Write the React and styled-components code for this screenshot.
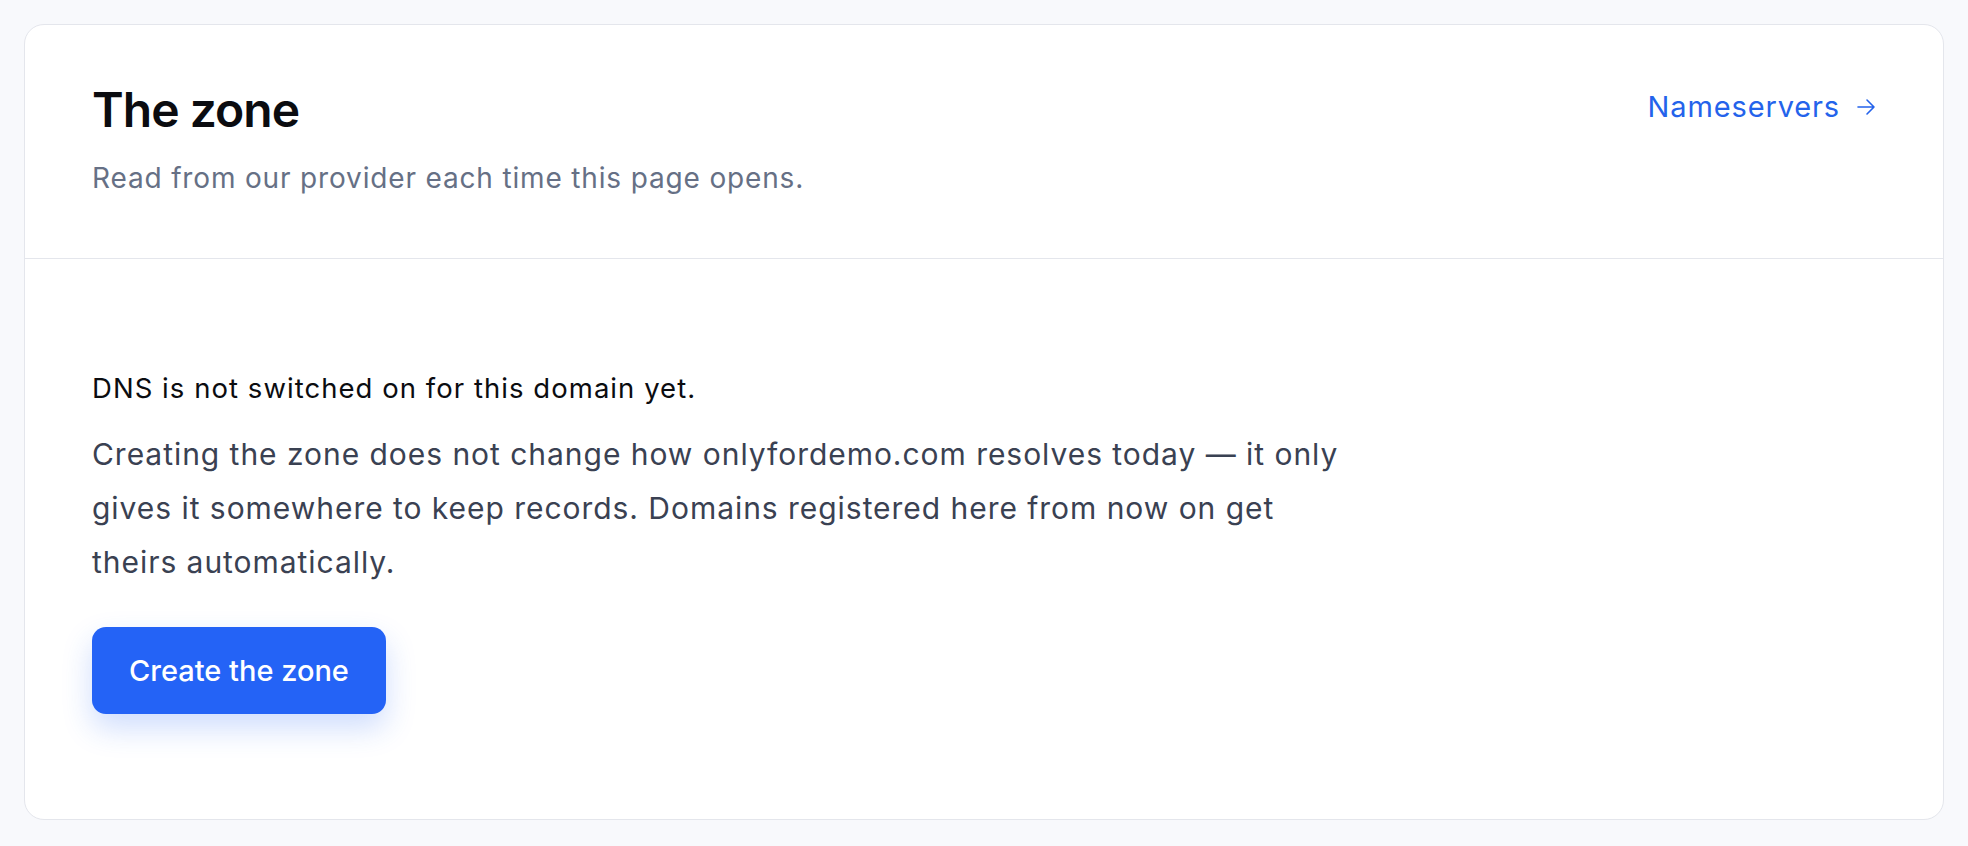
import React from "react";
import styled, { createGlobalStyle } from "styled-components";

const GlobalStyle = createGlobalStyle`
  html, body {
    margin: 0;
    padding: 0;
    background: #f8f9fc;
    font-family: Inter, "Noto Sans", sans-serif;
    -webkit-font-smoothing: antialiased;
  }
`;

const Page = styled.div`
  padding: 24px;
  min-height: 846px;
  box-sizing: border-box;
`;

const Card = styled.section`
  background: #ffffff;
  border: 1px solid #e4e6ec;
  border-radius: 20px;
`;

const Header = styled.header`
  display: flex;
  justify-content: space-between;
  align-items: flex-start;
  padding: 56px 67px 59px;
  border-bottom: 1px solid #e4e6ec;
`;

const Title = styled.h1`
  margin: 0;
  font-size: 48px;
  line-height: 1.2;
  font-weight: 600;
  color: #0b0c10;
  letter-spacing: -0.02em;
`;

const Subtitle = styled.p`
  margin: 18px 0 0;
  font-size: 28px;
  line-height: 1.5;
  color: #667085;
  letter-spacing: 0.03em;
`;

const NavLink = styled.a`
  display: flex;
  align-items: center;
  gap: 16px;
  margin-top: 4px;
  font-size: 29px;
  line-height: 1.5;
  color: #2463eb;
  text-decoration: none;
  letter-spacing: 0.03em;
  cursor: pointer;
`;

const Body = styled.div`
  padding: 109px 67px 105px;
`;

const Lead = styled.p`
  margin: 0;
  font-size: 27.5px;
  line-height: 1.5;
  color: #0b0c10;
  letter-spacing: 0.038em;
`;

const Text = styled.p`
  margin: 18px 0 0;
  max-width: 1260px;
  font-size: 30px;
  line-height: 54px;
  color: #3a4152;
  letter-spacing: 0.032em;
`;

const Button = styled.button`
  margin-top: 38px;
  height: 87px;
  padding: 0 37px;
  border: none;
  border-radius: 14px;
  background: #2463f6;
  color: #ffffff;
  font-family: inherit;
  font-size: 29px;
  font-weight: 500;
  box-shadow: 0 14px 30px rgba(36, 99, 246, 0.22);
  cursor: pointer;
`;

const Arrow = () => (
  <svg width="20" height="20" viewBox="0 0 20 20" fill="none" stroke="currentColor" strokeWidth="1.6" strokeLinecap="round" strokeLinejoin="round">
    <path d="M2 10h16M11 3l7 7-7 7" />
  </svg>
);

export default function App() {
  return (
    <>
      <GlobalStyle />
      <Page>
        <Card>
          <Header>
            <div>
              <Title>The zone</Title>
              <Subtitle>Read from our provider each time this page opens.</Subtitle>
            </div>
            <NavLink>
              Nameservers <Arrow />
            </NavLink>
          </Header>
          <Body>
            <Lead>DNS is not switched on for this domain yet.</Lead>
            <Text>
              Creating the zone does not change how onlyfordemo.com resolves today — it only gives it
              somewhere to keep records. Domains registered here from now on get theirs automatically.
            </Text>
            <Button>Create the zone</Button>
          </Body>
        </Card>
      </Page>
    </>
  );
}
